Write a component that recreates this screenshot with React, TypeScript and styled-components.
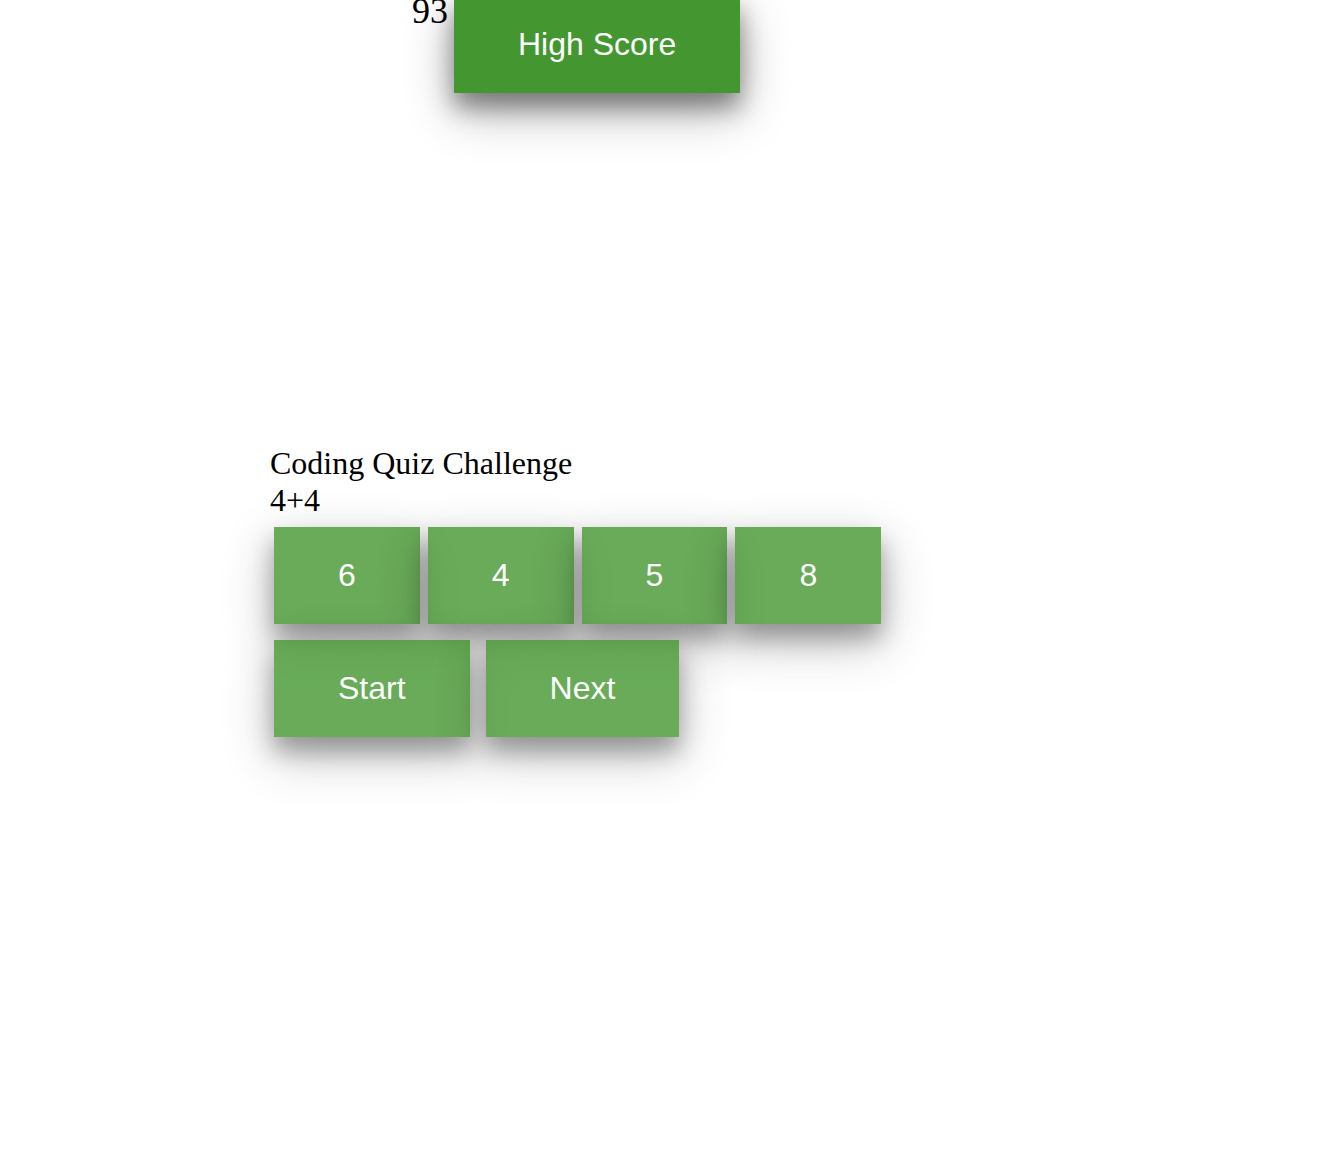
import React from 'react';
import styled, { createGlobalStyle } from 'styled-components';

const GlobalStyle = createGlobalStyle`
  body {
    margin: 0;
    background: #fff;
    color: #000;
    font-family: "Liberation Serif", "Times New Roman", serif;
    overflow: hidden;
  }
`;

const Page = styled.div`
  width: 1322px;
  height: 1156px;
  overflow: hidden;
`;

const Header = styled.header`
  display: flex;
  align-items: flex-start;
  gap: 6px;
  margin-top: -4px;
  padding-left: 412px;
`;

const Score = styled.span`
  font-size: 36px;
  margin-top: -6px;
`;

const Button = styled.button<{ $faded?: boolean }>`
  border: none;
  margin: 0;
  padding: 30px 64px;
  font-family: "Liberation Sans", Arial, sans-serif;
  font-size: 32px;
  line-height: normal;
  color: #fff;
  background: #449730;
  opacity: ${props => props.$faded ? 0.8 : 1};
  box-shadow: 0 14px 22px 0 rgba(0, 0, 0, 0.38), 0 18px 50px 0 rgba(0, 0, 0, 0.3);
  cursor: pointer;
`;

const Quiz = styled.main`
  margin-top: 352px;
  padding-left: 270px;
`;

const Title = styled.div`
  font-size: 32px;
`;

const Question = styled.div`
  font-size: 32px;
`;

const Answers = styled.div`
  display: flex;
  gap: 8px;
  margin-top: 8px;
  padding-left: 4px;
`;

const Controls = styled.div`
  display: flex;
  gap: 16px;
  margin-top: 16px;
  padding-left: 4px;
`;

const answers = ['6', '4', '5', '8'];

export default function App() {
  return (
    <Page>
      <GlobalStyle />
      <Header>
        <Score>93</Score>
        <Button>High Score</Button>
      </Header>
      <Quiz>
        <Title>Coding Quiz Challenge</Title>
        <Question>4+4</Question>
        <Answers>
          {answers.map(answer => (
            <Button key={answer} $faded>{answer}</Button>
          ))}
        </Answers>
        <Controls>
          <Button $faded>Start</Button>
          <Button $faded>Next</Button>
        </Controls>
      </Quiz>
    </Page>
  );
}
